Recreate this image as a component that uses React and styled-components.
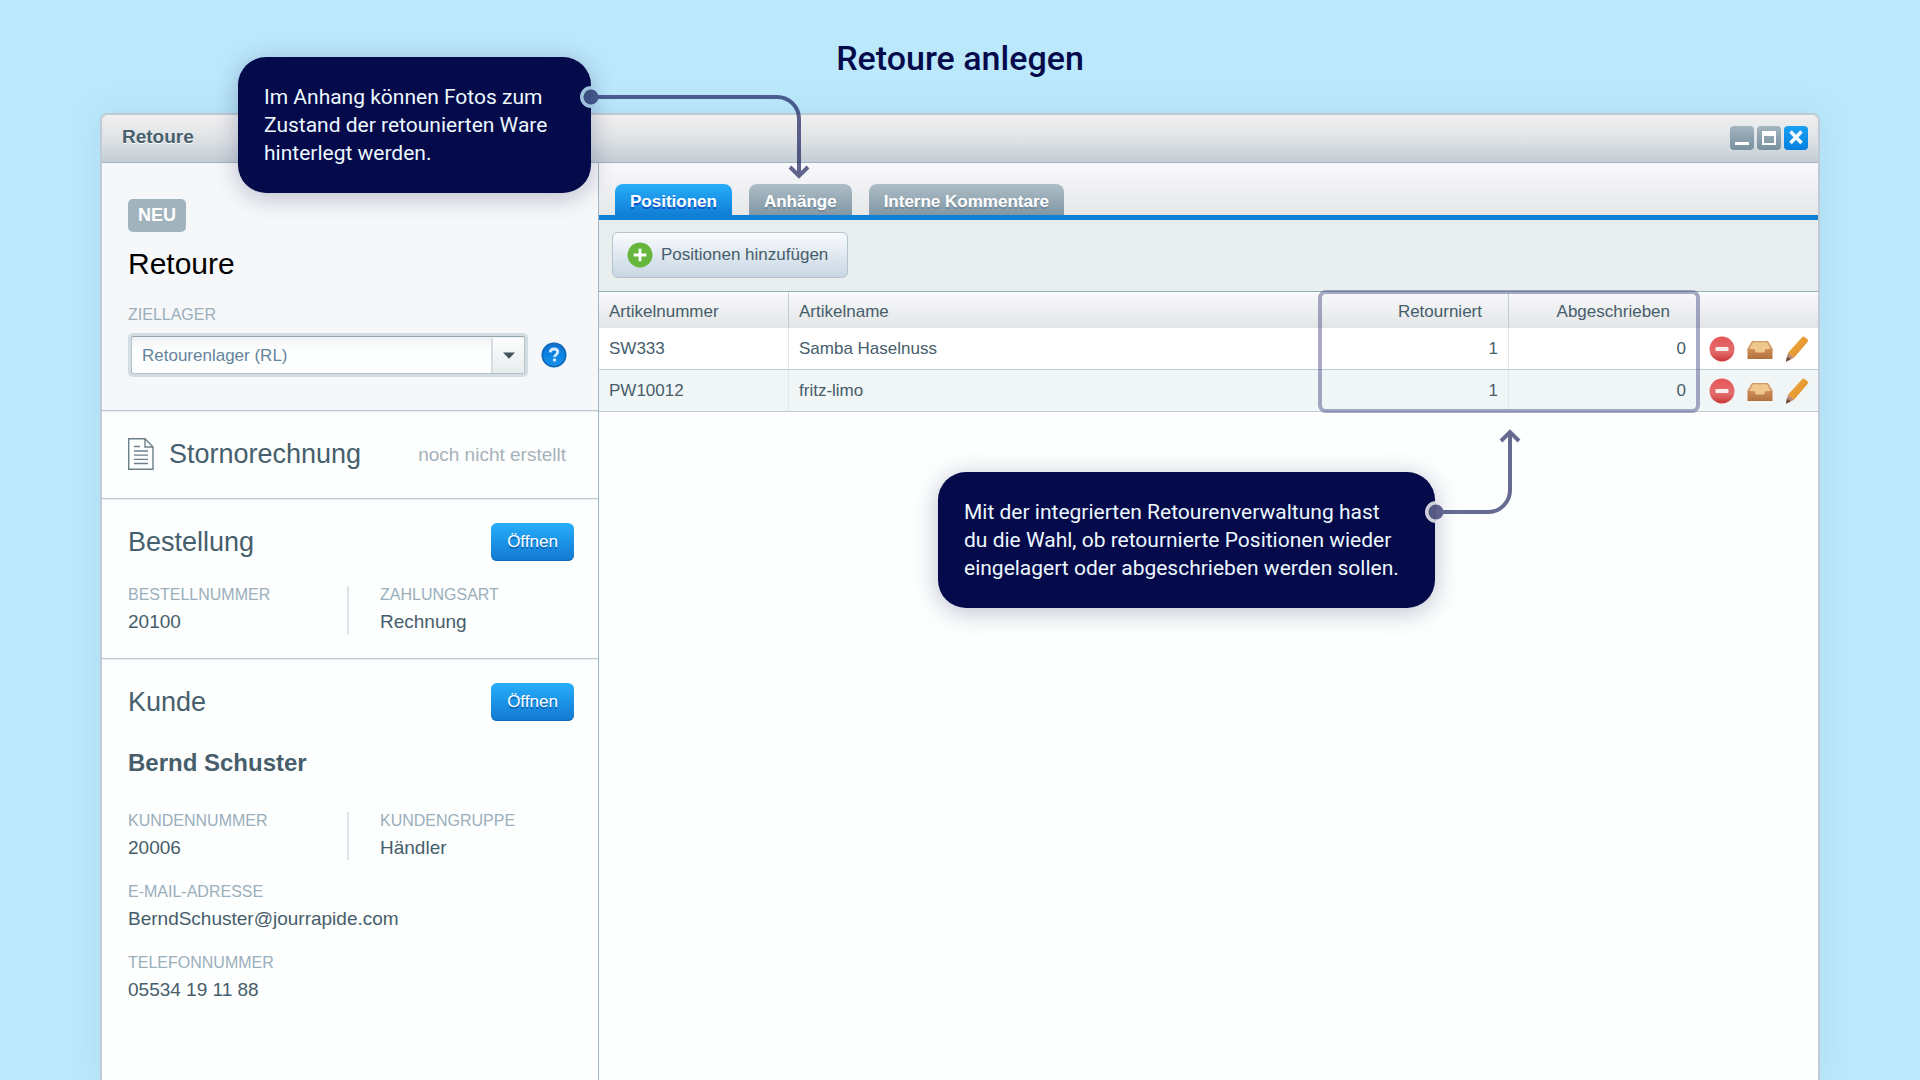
import React, { useId } from "react";
import styled, { createGlobalStyle } from "styled-components";

const sans = `"Liberation Sans", Arial, Helvetica, sans-serif`;
const display = `Roboto, "Open Sans", sans-serif`;

const GlobalStyle = createGlobalStyle`
  *, *::before, *::after { box-sizing: border-box; }
  body { margin: 0; background: #bce8fb; }
  h1, h2, h3, p, dl, dd { margin: 0; font-weight: 400; }
  button, select { font: inherit; }
  svg { display: block; }
`;

const Page = styled.div`
  min-height: 100vh;
  display: flex;
  flex-direction: column;
  padding: 0 100px;
  overflow: hidden;
  font-family: ${sans};
  font-size: 17px;
  color: #465d6b;
`;

const PageTitle = styled.h1`
  padding: 38px 0 35px;
  font-family: ${display};
  font-size: 34px;
  line-height: 40px;
  font-weight: 500;
  text-align: center;
  color: #050a4b;
`;

const Window = styled.section`
  position: relative;
  flex: 1;
  display: flex;
  flex-direction: column;
  border: 2px solid #c0cad4;
  border-bottom: 0;
  border-radius: 8px 8px 0 0;
  background: #fdfefe;
  box-shadow: 0 0 28px rgba(110, 175, 205, 0.22);
`;

const TitleBar = styled.header`
  display: flex;
  align-items: center;
  justify-content: space-between;
  height: 48px;
  padding: 0 10px 0 20px;
  border-bottom: 1px solid #9fb4bf;
  border-radius: 6px 6px 0 0;
  background: linear-gradient(#f0f0f0, #e0e3e6 50%, #c3cdd4);
`;

const WindowTitle = styled.h2`
  padding-bottom: 4px;
  font-size: 19px;
  line-height: 24px;
  font-weight: 700;
  color: #46606d;
  text-shadow: 0 1px 0 #fff;
`;

const WindowButtons = styled.div`
  display: flex;
  gap: 3px;
  padding-bottom: 2px;
`;

const WindowButton = styled.button`
  display: flex;
  width: 24px;
  height: 24px;
  padding: 0;
  border: 0;
  border-radius: 4px;
  background: ${(p) =>
    p.$primary
      ? "linear-gradient(#1aa0f2, #0580e0)"
      : "linear-gradient(#a3b5bf, #7890a0)"};
`;

const Body = styled.div`
  flex: 1;
  display: flex;
`;

const Sidebar = styled.aside`
  flex: 0 0 497px;
  border-right: 1px solid #9fb8c4;
`;

const Section = styled.section`
  padding: ${(p) => p.$pad};
  border-bottom: ${(p) => (p.$last ? "0" : "1px solid #b9c8d1")};
  background: ${(p) => (p.$tinted ? "#f6f7f9" : "transparent")};
  box-shadow: ${(p) => (p.$last ? "none" : "0 1px 0 #e6ecef")};
`;

const Badge = styled.span`
  display: inline-block;
  padding: 0 10px;
  border-radius: 5px;
  background: #a1b4be;
  font-size: 18px;
  line-height: 33px;
  font-weight: 700;
  color: #fff;
`;

const RecordTitle = styled.h2`
  padding: 14px 0 20px;
  font-size: 30px;
  line-height: 36px;
  color: #000;
`;

const FieldLabel = styled.label`
  display: block;
  font-size: 16px;
  line-height: 26px;
  color: #9aafbb;
`;

const FieldRow = styled.div`
  display: flex;
  align-items: center;
  gap: 13px;
  padding-top: 5px;
`;

const SelectFrame = styled.div`
  flex: 1;
  position: relative;
  padding: 3px;
  border-radius: 5px;
  background: #d3dde2;
`;

const Select = styled.select`
  appearance: none;
  display: block;
  width: 100%;
  height: 38px;
  padding: 0 44px 0 10px;
  border: 1px solid #b5c2ca;
  border-top-color: #96a5ae;
  border-radius: 3px;
  background: linear-gradient(#eff2f3, #fdfefe 12px);
  color: #63849a;
`;

const SelectArrow = styled.span`
  position: absolute;
  top: 5px;
  right: 4px;
  bottom: 4px;
  width: 33px;
  display: flex;
  align-items: center;
  justify-content: center;
  border-left: 2px solid #d5dde1;
  background: linear-gradient(#fdfdfe, #e6eded);
  pointer-events: none;
`;

const IconButton = styled.button`
  display: block;
  padding: 0;
  border: 0;
  background: none;
`;

const SectionHead = styled.div`
  display: flex;
  align-items: center;
  min-height: 38px;
`;

const SectionTitle = styled.h3`
  flex: 1;
  font-size: 27px;
  line-height: 36px;
  color: #465f6c;
`;

const DocIconBox = styled.span`
  display: flex;
  padding-right: 15px;
`;

const Status = styled.span`
  padding-top: 2px;
  font-size: 19px;
  color: #a5b2b9;
`;

const OpenButton = styled.button`
  width: 83px;
  height: 38px;
  padding: 0;
  border: 0;
  border-radius: 6px;
  background: linear-gradient(#26aefa, #1279d0);
  box-shadow: inset 0 -1px 0 #0e6dc0;
  color: #fff;
  text-shadow: 0 2px 0 #0a62b5;
`;

const CustomerName = styled.p`
  padding: 27px 0 9px;
  font-size: 24px;
  line-height: 30px;
  font-weight: 700;
`;

const Facts = styled.dl`
  display: grid;
  grid-template-columns: 219px 1fr;
  row-gap: 23px;
  padding-top: 25px;
`;

const Fact = styled.div`
  grid-column: ${(p) => (p.$wide ? "1 / -1" : "auto")};
  padding-left: ${(p) => (p.$divided ? "31px" : "0")};
  border-left: ${(p) => (p.$divided ? "2px solid #dde5ea" : "0")};
`;

const FactName = styled.dt`
  font-size: 16px;
  line-height: 18px;
  color: #9aafbb;
`;

const FactValue = styled.dd`
  padding-top: 6px;
  font-size: 19px;
  line-height: 24px;
`;

const Main = styled.main`
  flex: 1;
  min-width: 0;
`;

const Tabs = styled.nav`
  display: flex;
  align-items: flex-end;
  gap: 17px;
  height: 57px;
  padding: 0 16px;
  border-bottom: 5px solid #1080d5;
  background: linear-gradient(#f9f9fb, #e5e7e9);
`;

const Tab = styled.button`
  height: 31px;
  padding: 4px 15px 0;
  border: 0;
  border-radius: 8px 8px 0 0;
  background: ${(p) =>
    p.$active
      ? "linear-gradient(#27adf9, #107fd5)"
      : "linear-gradient(#adbdc6, #8297a4)"};
  font-weight: 700;
  color: #fff;
  text-shadow: 0 2px 0 ${(p) => (p.$active ? "#0b50cc" : "#75899a")};
`;

const Toolbar = styled.div`
  display: flex;
  align-items: center;
  height: 72px;
  padding: 0 13px 2px;
  border-bottom: 1px solid #94abb8;
  background: #e8eded;
`;

const AddButton = styled.button`
  display: flex;
  align-items: center;
  gap: 8px;
  height: 46px;
  padding: 0 19px 0 14px;
  border: 1px solid #b4c4cf;
  border-radius: 6px;
  background: linear-gradient(#f9fbfd, #c8d6e3);
  color: #465d6b;
`;

const TableArea = styled.div`
  position: relative;
`;

const Table = styled.table`
  width: 100%;
  border-collapse: separate;
  border-spacing: 0;
  table-layout: fixed;
`;

const Col = styled.col`
  width: ${(p) => p.$width || "auto"};
`;

const HeadCell = styled.th`
  height: 36px;
  padding: 2px ${(p) => (p.$numeric ? "26px" : "10px")} 0 10px;
  border-top: 2px solid #fdfefe;
  border-left: ${(p) => (p.$ruled ? "1px solid #c2cbd1" : "0")};
  background: linear-gradient(#f8f8fa, #e2e5e6);
  font-weight: 400;
  text-align: ${(p) => (p.$numeric ? "right" : "left")};
`;

const Row = styled.tr`
  background: ${(p) => (p.$striped ? "#f0f5f6" : "#fff")};
`;

const Cell = styled.td`
  height: ${(p) => (p.$first ? "40px" : "42px")};
  padding: 0 10px;
  border-bottom: 1px solid #bccbd4;
  border-left: ${(p) => (p.$ruled ? "1px solid #e1e7ec" : "0")};
  text-align: ${(p) => (p.$numeric ? "right" : "left")};
`;

const Actions = styled.div`
  display: flex;
  align-items: center;
  gap: 12px;
  padding-left: 3px;
`;

const Highlight = styled.div`
  position: absolute;
  top: -2px;
  right: 118px;
  bottom: -1px;
  width: 382px;
  border: 4px solid rgba(82, 86, 140, 0.5);
  border-radius: 8px;
  pointer-events: none;
`;

const Callout = styled.p`
  position: absolute;
  top: ${(p) => p.$top};
  left: ${(p) => p.$left || "auto"};
  right: ${(p) => p.$right || "auto"};
  width: ${(p) => p.$width};
  padding: 26px;
  border-radius: 28px;
  background: #050a4b;
  box-shadow: 0 4px 24px rgba(5, 10, 75, 0.25);
  font-family: ${display};
  font-size: 21px;
  line-height: 28px;
  white-space: nowrap;
  color: #ecf8fe;
`;

const Connector = styled.svg`
  position: absolute;
  top: ${(p) => p.$top};
  left: ${(p) => p.$left || "auto"};
  right: ${(p) => p.$right || "auto"};
  overflow: visible;
  pointer-events: none;
`;

function HelpIcon() {
  const id = useId();
  return (
    <svg width="26" height="26" viewBox="0 0 26 26" aria-hidden="true">
      <defs>
        <linearGradient id={id} x1="0" y1="0" x2="0" y2="1">
          <stop offset="0" stopColor="#1273cf" />
          <stop offset="0.5" stopColor="#0a83e4" />
          <stop offset="1" stopColor="#1b95ec" />
        </linearGradient>
      </defs>
      <circle cx="13" cy="13" r="12.5" fill={`url(#${id})`} />
      <circle cx="13" cy="13" r="11.5" fill="none" stroke="#1668b5" strokeWidth="1.5" />
      <path
        d="M9.2 10.4c.2-2.3 1.7-3.4 3.8-3.4s3.8 1.100 3.800 3.100c0 2.400-3.200 2.400-3.200 4.900"
        fill="none"
        stroke="#d3ebfb"
        strokeWidth="2.8"
      />
      <rect x="12" y="16.6" width="3" height="2.8" fill="#d3ebfb" />
    </svg>
  );
}

function DocumentIcon() {
  return (
    <svg width="26" height="32" viewBox="0 0 26 32" fill="none" stroke="#6b7f8a" aria-hidden="true">
      <path d="M.7.7H17L25 9v22.300H.7z" strokeWidth="1.4" />
      <path d="M17 .7V9h8" strokeWidth="1.4" />
      <path d="M6 8.500h6M6 13h14M6 17.200h14M6 21.400h14M6 25.500h14" strokeWidth="1.3" />
    </svg>
  );
}

function PlusIcon() {
  return (
    <svg width="26" height="26" viewBox="0 0 26 26" aria-hidden="true">
      <circle cx="13" cy="13" r="12.5" fill="#67b73f" />
      <path d="M13 6.700v12.600M6.700 13h12.600" stroke="#fff" strokeWidth="2.8" />
    </svg>
  );
}

function RemoveIcon() {
  const id = useId();
  return (
    <svg width="26" height="26" viewBox="0 0 26 26" aria-hidden="true">
      <defs>
        <linearGradient id={id} x1="0" y1="0" x2="0" y2="1">
          <stop offset="0" stopColor="#e65557" />
          <stop offset="0.6" stopColor="#e46d6d" />
          <stop offset="1" stopColor="#cb3538" />
        </linearGradient>
      </defs>
      <circle cx="13" cy="13" r="12.5" fill={`url(#${id})`} />
      <rect x="6.500" y="11" width="13" height="4" rx="1" fill="#fbeeee" />
    </svg>
  );
}

function TrayIcon() {
  const id = useId();
  return (
    <svg width="26" height="26" viewBox="0 0 26 26" aria-hidden="true">
      <defs>
        <linearGradient id={id} x1="0" y1="0" x2="0" y2="1">
          <stop offset="0" stopColor="#cf8f58" />
          <stop offset="1" stopColor="#b0713d" />
        </linearGradient>
      </defs>
      <path d="M5 5h16l4.500 7.500V15H.500v-2.500z" fill="#d39c66" />
      <path d="M6 6.300h14l4.200 7.700-6 3H8L1.800 14z" fill="#f0c68f" />
      <path
        d="M.5 13h6.300c1.600 0 1 3.500 2.800 3.500h6.800c1.800 0 1.200-3.500 2.800-3.500h6.300v10H.5z"
        fill={`url(#${id})`}
      />
    </svg>
  );
}

function PencilIcon() {
  const id = useId();
  return (
    <svg width="24" height="26" viewBox="0 0 24 26" aria-hidden="true">
      <defs>
        <linearGradient id={id} x1="0" y1="0" x2="1" y2="1">
          <stop offset="0" stopColor="#efae43" />
          <stop offset="1" stopColor="#df8a24" />
        </linearGradient>
      </defs>
      <path d="M17.300.900q1.400-.8 2.700.300l2.500 2q1.200 1.200.2 2.600L9 21.800l-6-5z" fill={`url(#${id})`} />
      <path d="M3 16.800l6 5-8 4z" fill="#b98a70" />
      <path d="M1.800 20.800l4 2.500L1 25.800z" fill="#6d4b3c" />
    </svg>
  );
}

function Info({ name, value, divided, wide }) {
  return (
    <Fact $divided={divided} $wide={wide}>
      <FactName>{name}</FactName>
      <FactValue>{value}</FactValue>
    </Fact>
  );
}

const rows = [
  { number: "SW333", name: "Samba Haselnuss", returned: 1, writtenOff: 0 },
  { number: "PW10012", name: "fritz-limo", returned: 1, writtenOff: 0 },
];

const tabs = ["Positionen", "Anhänge", "Interne Kommentare"];

export default function App() {
  return (
    <>
      <GlobalStyle />
      <Page>
        <PageTitle>Retoure anlegen</PageTitle>
        <Window>
          <TitleBar>
            <WindowTitle>Retoure</WindowTitle>
            <WindowButtons>
              <WindowButton aria-label="Minimieren">
                <svg width="24" height="24" aria-hidden="true">
                  <rect x="5" y="16" width="14" height="3" fill="#fff" />
                </svg>
              </WindowButton>
              <WindowButton aria-label="Maximieren">
                <svg width="24" height="24" aria-hidden="true">
                  <path d="M5 5h14v14H5zM7 10v7h10v-7z" fill="#fff" fillRule="evenodd" />
                </svg>
              </WindowButton>
              <WindowButton $primary aria-label="Schließen">
                <svg width="24" height="24" aria-hidden="true">
                  <path d="M6.5 5.500l11 11.500M17.500 5.500L6.500 17" stroke="#f2f9fe" strokeWidth="3.6" />
                </svg>
              </WindowButton>
            </WindowButtons>
          </TitleBar>

          <Body>
            <Sidebar>
              <Section $tinted $pad="36px 31px 33px 26px">
                <Badge>NEU</Badge>
                <RecordTitle>Retoure</RecordTitle>
                <FieldLabel htmlFor="warehouse">ZIELLAGER</FieldLabel>
                <FieldRow>
                  <SelectFrame>
                    <Select id="warehouse" defaultValue="rl">
                      <option value="rl">Retourenlager (RL)</option>
                    </Select>
                    <SelectArrow>
                      <svg width="12" height="7" aria-hidden="true">
                        <path d="M0 .500h12L6 6.800z" fill="#43545e" />
                      </svg>
                    </SelectArrow>
                  </SelectFrame>
                  <IconButton aria-label="Hilfe">
                    <HelpIcon />
                  </IconButton>
                </FieldRow>
              </Section>

              <Section $pad="24px 32px 25px 26px">
                <SectionHead>
                  <DocIconBox>
                    <DocumentIcon />
                  </DocIconBox>
                  <SectionTitle>Stornorechnung</SectionTitle>
                  <Status>noch nicht erstellt</Status>
                </SectionHead>
              </Section>

              <Section $pad="24px 24px 24px 26px">
                <SectionHead>
                  <SectionTitle>Bestellung</SectionTitle>
                  <OpenButton>Öffnen</OpenButton>
                </SectionHead>
                <Facts>
                  <Info name="BESTELLNUMMER" value="20100" />
                  <Info name="ZAHLUNGSART" value="Rechnung" divided />
                </Facts>
              </Section>

              <Section $last $pad="24px 24px 24px 26px">
                <SectionHead>
                  <SectionTitle>Kunde</SectionTitle>
                  <OpenButton>Öffnen</OpenButton>
                </SectionHead>
                <CustomerName>Bernd Schuster</CustomerName>
                <Facts>
                  <Info name="KUNDENNUMMER" value="20006" />
                  <Info name="KUNDENGRUPPE" value="Händler" divided />
                  <Info name="E-MAIL-ADRESSE" value="BerndSchuster@jourrapide.com" wide />
                  <Info name="TELEFONNUMMER" value="05534 19 11 88" wide />
                </Facts>
              </Section>
            </Sidebar>

            <Main>
              <Tabs>
                {tabs.map((label, i) => (
                  <Tab key={label} $active={i === 0}>
                    {label}
                  </Tab>
                ))}
              </Tabs>
              <Toolbar>
                <AddButton>
                  <PlusIcon />
                  Positionen hinzufügen
                </AddButton>
              </Toolbar>
              <TableArea>
                <Table>
                  <colgroup>
                    <Col $width="189px" />
                    <Col />
                    <Col $width="189px" />
                    <Col $width="188px" />
                    <Col $width="122px" />
                  </colgroup>
                  <thead>
                    <tr>
                      <HeadCell>Artikelnummer</HeadCell>
                      <HeadCell $ruled>Artikelname</HeadCell>
                      <HeadCell $numeric>Retourniert</HeadCell>
                      <HeadCell $numeric $ruled>
                        Abgeschrieben
                      </HeadCell>
                      <HeadCell aria-label="Aktionen" />
                    </tr>
                  </thead>
                  <tbody>
                    {rows.map((row, i) => (
                      <Row key={row.number} $striped={i % 2 === 1}>
                        <Cell $first={i === 0}>{row.number}</Cell>
                        <Cell $ruled>{row.name}</Cell>
                        <Cell $numeric>{row.returned}</Cell>
                        <Cell $numeric $ruled>
                          {row.writtenOff}
                        </Cell>
                        <Cell $first={i === 0}>
                          <Actions>
                            <IconButton aria-label="Entfernen">
                              <RemoveIcon />
                            </IconButton>
                            <IconButton aria-label="Einlagern">
                              <TrayIcon />
                            </IconButton>
                            <IconButton aria-label="Bearbeiten">
                              <PencilIcon />
                            </IconButton>
                          </Actions>
                        </Cell>
                      </Row>
                    ))}
                  </tbody>
                </Table>
                <Highlight />
              </TableArea>
            </Main>
          </Body>

          <Callout $top="-58px" $left="136px" $width="353px">
            Im Anhang können Fotos zum
            <br />
            Zustand der retounierten Ware
            <br />
            hinterlegt werden.
          </Callout>
          <Connector $top="-33px" $left="477px" width="230" height="100" aria-hidden="true">
            <path d="M12 4a11 11 0 0 0 0 22z" fill="#9dc3dc" />
            <g opacity="0.62" fill="none" stroke="#050a4b" strokeWidth="4">
              <path d="M12 15h186a22 22 0 0 1 22 22v57M211 85l9 9l9-9" />
              <circle cx="12" cy="15" r="7.5" fill="#050a4b" stroke="none" />
            </g>
          </Connector>

          <Callout $top="357px" $right="383px" $width="497px">
            Mit der integrierten Retourenverwaltung hast
            <br />
            du die Wahl, ob retournierte Positionen wieder
            <br />
            eingelagert oder abgeschrieben werden sollen.
          </Callout>
          <Connector $top="312px" $right="299px" width="100" height="100" aria-hidden="true">
            <path d="M17 74a11 11 0 0 0 0 22z" fill="#d0d0da" />
            <g opacity="0.6" fill="none" stroke="#050a4b" strokeWidth="4">
              <path d="M17 85h52a22 22 0 0 0 22-22V5M82 14l9-9l9 9" />
              <circle cx="17" cy="85" r="7.5" fill="#050a4b" stroke="none" />
            </g>
          </Connector>
        </Window>
      </Page>
    </>
  );
}
